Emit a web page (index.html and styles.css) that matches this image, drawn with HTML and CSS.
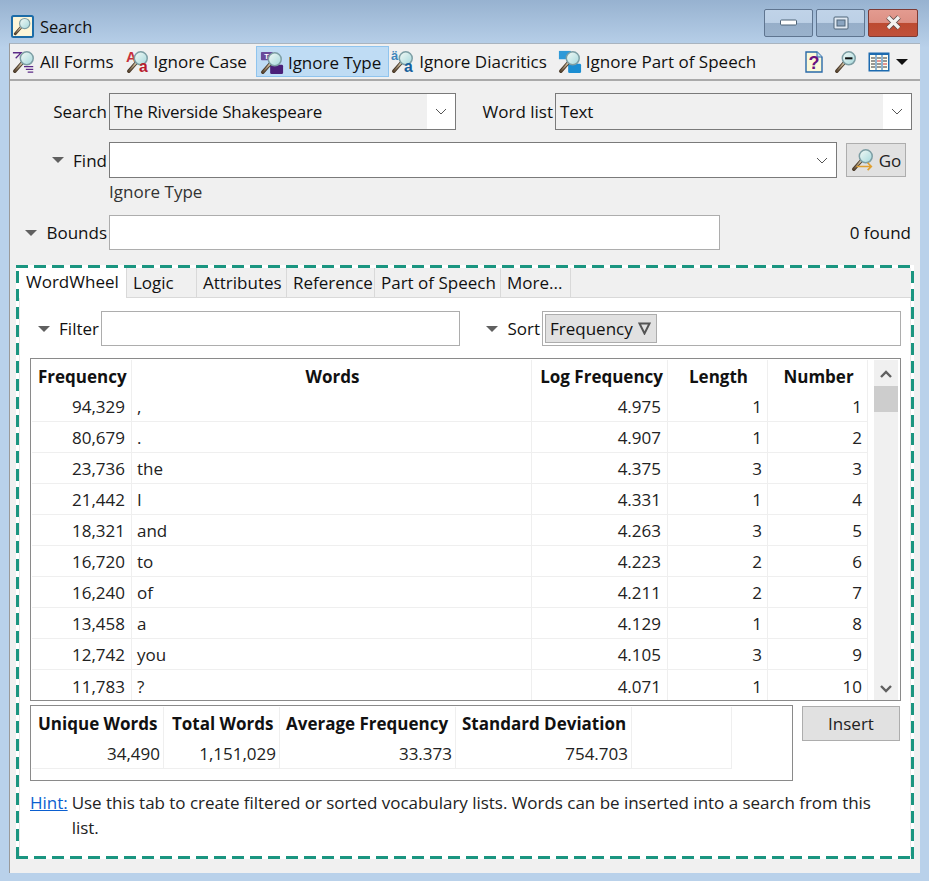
FILE: index.html
```html
<!DOCTYPE html>
<html lang="en">
<head>
    <meta charset="UTF-8">
    <meta name="viewport" content="width=device-width, initial-scale=1.0">
    <title>Search</title>
    <link rel="stylesheet" href="styles.css">
</head>
<body>
    <svg class="defs" width="0" height="0">
        <defs>
            <linearGradient id="glass" x1="0" y1="0" x2="1" y2="1">
                <stop offset="0" stop-color="#f4faf6"/>
                <stop offset="1" stop-color="#a4d8dc"/>
            </linearGradient>
            <linearGradient id="handle" x1="1" y1="0" x2="0" y2="1">
                <stop offset="0" stop-color="#d8c8a8"/>
                <stop offset="1" stop-color="#5a4630"/>
            </linearGradient>
            <symbol id="lens" viewBox="0 0 26 26">
                <path d="M10.500 14.500 3 23" stroke="#4a3a2a" stroke-width="3.800" stroke-linecap="round" fill="none"/>
                <path d="M10.500 14.500 3 23" stroke="url(#handle)" stroke-width="1.800" stroke-linecap="round" fill="none"/>
                <circle cx="16" cy="9" r="7" fill="url(#glass)" stroke="#7d9ea4" stroke-width="1.600"/>
            </symbol>
        </defs>
    </svg>
    <div class="window">
        <div class="titlebar">
            <svg class="title-icon" width="23" height="23" viewBox="0 0 23 23">
                <rect x="1" y="1" width="21" height="21" rx="1.500" fill="#fdf6d8" stroke="#1c6ca8" stroke-width="2"/>
                <use href="#lens" x="2" y="2" width="19" height="19"/>
            </svg>
            <span class="title-text">Search</span>
            <div class="win-btns">
                <div class="win-btn">
                    <svg width="17" height="8" viewBox="0 0 17 8"><rect x="0.500" y="1" width="16" height="5" rx="1" fill="#fff" stroke="#4f6478"/></svg>
                </div>
                <div class="win-btn">
                    <svg width="16" height="14" viewBox="0 0 16 14"><rect x="1" y="1" width="14" height="12" rx="1" fill="#dfe8f2" stroke="#4f6478"/><rect x="4" y="4" width="8" height="6" fill="#8aa4c0" stroke="#4f6478"/></svg>
                </div>
                <div class="win-btn win-close">
                    <svg width="17" height="15" viewBox="0 0 17 15"><path d="M3 2 14 13M14 2 3 13" stroke="#5a4a48" stroke-width="5"/><path d="M3 2 14 13M14 2 3 13" stroke="#f4f2f0" stroke-width="3.400"/></svg>
                </div>
            </div>
        </div>
        <div class="client">
            <div class="toolbar">
                <div class="tool tool-first">
                    <svg class="tool-icon" width="24" height="26" viewBox="0 0 26 26">
                        <path d="M1 3h9L4 9" stroke="#5b2a86" stroke-width="1.400" fill="none"/>
                        <use href="#lens" width="26" height="26"/>
                        <path d="M13 18h10M15 21h8M17 24h6" stroke="#5b2a86" stroke-width="1.200"/>
                    </svg>
                    <span>All Forms</span>
                </div>
                <div class="tool tool-case">
                    <svg class="tool-icon" width="24" height="26" viewBox="0 0 26 26">
                        <text x="0" y="13" class="ico-a">A</text>
                        <use href="#lens" width="26" height="26"/>
                        <text x="14" y="24" class="ico-b">a</text>
                    </svg>
                    <span>Ignore Case</span>
                </div>
                <div class="tool tool-on">
                    <svg class="tool-icon" width="24" height="26" viewBox="0 0 26 26">
                        <rect x="1" y="1" width="13" height="9" rx="1" fill="#6a4a9a"/>
                        <text x="4.500" y="8.500" class="ico-t">T</text>
                        <rect x="11" y="15" width="14" height="10" rx="1.500" fill="#4a1f78"/>
                        <use href="#lens" width="26" height="26"/>
                    </svg>
                    <span>Ignore Type</span>
                </div>
                <div class="tool">
                    <svg class="tool-icon" width="24" height="26" viewBox="0 0 26 26">
                        <text x="0" y="11" class="ico-d">ä</text>
                        <use href="#lens" width="26" height="26"/>
                        <text x="14" y="24" class="ico-c">a</text>
                    </svg>
                    <span>Ignore Diacritics</span>
                </div>
                <div class="tool">
                    <svg class="tool-icon" width="24" height="26" viewBox="0 0 26 26">
                        <rect x="1" y="1" width="13" height="9" fill="#2f9ad8"/>
                        <rect x="11" y="15" width="14" height="10" rx="1.500" fill="#1b8ed2"/>
                        <use href="#lens" width="26" height="26"/>
                    </svg>
                    <span>Ignore Part of Speech</span>
                </div>
                <div class="tool-right">
                    <svg width="20" height="22" viewBox="0 0 20 22">
                        <path d="M2 1h11l5 5v15H2z" fill="#fbf8d8" stroke="#2a6aa8" stroke-width="1.400"/>
                        <path d="M13 1v5h5" fill="#cfe0ee" stroke="#2a6aa8"/>
                        <text x="4.500" y="18" class="ico-q">?</text>
                    </svg>
                    <svg width="24" height="24" viewBox="0 0 26 26">
                        <use href="#lens" width="26" height="26"/>
                        <path d="M12 9h8" stroke="#111" stroke-width="2.200"/>
                    </svg>
                    <svg width="22" height="20" viewBox="0 0 22 20">
                        <rect x="0.500" y="0.500" width="21" height="19" fill="#1d6bb0"/>
                        <rect x="2" y="3" width="18" height="15" fill="#fdfcf0"/>
                        <path d="M8 3v15M14 3v15" stroke="#1d6bb0"/>
                        <path d="M3 6h4M3 9h4M3 12h4M3 15h4M9 6h4M9 12h4M9 15h4M15 6h4M15 9h4M15 15h4" stroke="#333" stroke-width="1"/>
                        <path d="M9 9h4M15 12h4" stroke="#d03030" stroke-width="1.200"/>
                    </svg>
                    <span class="tri-black"></span>
                </div>
            </div>
            <div class="main">
                <div class="row row-search">
                    <label class="lbl lbl-wide">Search</label>
                    <div class="combo combo-search">
                        <span class="combo-val">The Riverside Shakespeare</span>
                        <span class="chev"><svg width="12" height="7" viewBox="0 0 12 7"><path d="M1 1l5 5 5-5" fill="none" stroke="#555"/></svg></span>
                    </div>
                    <label class="lbl lbl-list">Word list</label>
                    <div class="combo combo-list">
                        <span class="combo-val">Text</span>
                        <span class="chev"><svg width="12" height="7" viewBox="0 0 12 7"><path d="M1 1l5 5 5-5" fill="none" stroke="#555"/></svg></span>
                    </div>
                </div>
                <div class="row row-find">
                    <label class="lbl lbl-wide"><span class="tri"></span>Find</label>
                    <div class="combo combo-find">
                        <span class="combo-val"></span>
                        <span class="chev"><svg width="12" height="7" viewBox="0 0 12 7"><path d="M1 1l5 5 5-5" fill="none" stroke="#555"/></svg></span>
                    </div>
                    <button class="btn btn-go">
                        <svg width="24" height="24" viewBox="0 0 26 26">
                            <use href="#lens" width="26" height="26"/>
                            <path d="M6 20h16m-4-4 4 4-4 4" fill="none" stroke="#e0a030" stroke-width="1.800"/>
                        </svg>
                        Go
                    </button>
                </div>
                <div class="find-note">Ignore Type</div>
                <div class="row row-bounds">
                    <label class="lbl lbl-wide"><span class="tri"></span>Bounds</label>
                    <div class="input input-bounds"></div>
                    <span class="found">0 found</span>
                </div>
                <div class="frame">
                    <div class="tabs">
                        <div class="tab tab-on tab-w108">WordWheel</div>
                        <div class="tab tab-w70">Logic</div>
                        <div class="tab tab-w90">Attributes</div>
                        <div class="tab tab-w88">Reference</div>
                        <div class="tab tab-w126">Part of Speech</div>
                        <div class="tab tab-w70">More...</div>
                    </div>
                    <div class="panel">
                        <div class="row row-filter">
                            <label class="lbl lbl-filter"><span class="tri"></span>Filter</label>
                            <div class="input input-filter"></div>
                            <label class="lbl lbl-sort"><span class="tri"></span>Sort</label>
                            <div class="input input-sort">
                                <span class="chip">Frequency
                                    <svg width="13" height="13" viewBox="0 0 13 13"><path d="M1.500 1.500h10L6.500 11.500z" fill="none" stroke="#555" stroke-width="2"/></svg>
                                </span>
                            </div>
                        </div>
                        <div class="grid-box">
                            <table class="words">
                                <colgroup>
                                    <col class="c-freq"><col class="c-word"><col class="c-log"><col class="c-len"><col class="c-num">
                                </colgroup>
                                <thead>
                                    <tr><th class="left-pad">Frequency</th><th class="mid">Words</th><th>Log Frequency</th><th class="mid">Length</th><th class="mid">Number</th></tr>
                                </thead>
                                <tbody>
                                    <tr><td>94,329</td><td class="word">,</td><td>4.975</td><td>1</td><td>1</td></tr>
                                    <tr><td>80,679</td><td class="word">.</td><td>4.907</td><td>1</td><td>2</td></tr>
                                    <tr><td>23,736</td><td class="word">the</td><td>4.375</td><td>3</td><td>3</td></tr>
                                    <tr><td>21,442</td><td class="word">I</td><td>4.331</td><td>1</td><td>4</td></tr>
                                    <tr><td>18,321</td><td class="word">and</td><td>4.263</td><td>3</td><td>5</td></tr>
                                    <tr><td>16,720</td><td class="word">to</td><td>4.223</td><td>2</td><td>6</td></tr>
                                    <tr><td>16,240</td><td class="word">of</td><td>4.211</td><td>2</td><td>7</td></tr>
                                    <tr><td>13,458</td><td class="word">a</td><td>4.129</td><td>1</td><td>8</td></tr>
                                    <tr><td>12,742</td><td class="word">you</td><td>4.105</td><td>3</td><td>9</td></tr>
                                    <tr><td>11,783</td><td class="word">?</td><td>4.071</td><td>1</td><td>10</td></tr>
                                </tbody>
                            </table>
                            <div class="scrollbar">
                                <svg width="14" height="9" viewBox="0 0 14 9"><path d="M2 7l5-5 5 5" fill="none" stroke="#606060" stroke-width="2.400"/></svg>
                                <div class="thumb"></div>
                                <div class="track"></div>
                                <svg width="14" height="9" viewBox="0 0 14 9"><path d="M2 2l5 5 5-5" fill="none" stroke="#606060" stroke-width="2.400"/></svg>
                            </div>
                        </div>
                        <div class="summary-row">
                            <div class="summary-box">
                                <table class="summary">
                                    <colgroup>
                                        <col class="s-uni"><col class="s-tot"><col class="s-avg"><col class="s-dev"><col class="s-end">
                                    </colgroup>
                                    <thead>
                                        <tr><th>Unique Words</th><th>Total Words</th><th>Average Frequency</th><th>Standard Deviation</th><th></th></tr>
                                    </thead>
                                    <tbody>
                                        <tr><td>34,490</td><td>1,151,029</td><td>33.373</td><td>754.703</td><td></td></tr>
                                    </tbody>
                                </table>
                            </div>
                            <button class="btn btn-insert">Insert</button>
                        </div>
                        <div class="hint">
                            <a class="hint-link" href="#">Hint:</a>
                            <p>Use this tab to create filtered or sorted vocabulary lists. Words can be inserted into a search from this list.</p>
                        </div>
                    </div>
                </div>
            </div>
        </div>
    </div>
</body>
</html>
```

FILE: styles.css
```css
* {
    margin: 0;
    padding: 0;
    box-sizing: border-box;
}
body {
    font-family: "Open Sans", "Noto Sans", Arial, sans-serif;
    font-size: 17px;
    color: #111;
    overflow: hidden;
}
.defs {
    position: absolute;
}
.window {
    width: 929px;
    height: 881px;
    padding: 0 9px 8px;
    display: flex;
    flex-direction: column;
    background: linear-gradient(#97b2d0 0, #b9d1ea 48px);
}
.titlebar {
    height: 43px;
    flex: none;
    display: flex;
    align-items: center;
    padding-left: 2px;
    padding-top: 9px;
}
.title-icon {
    margin-right: 6px;
}
.title-text {
    font-size: 16.500px;
}
.win-btns {
    margin-left: auto;
    margin-top: -7px;
    margin-right: 2px;
    display: flex;
    gap: 3px;
}
.win-btn {
    width: 49px;
    height: 28px;
    display: flex;
    align-items: center;
    justify-content: center;
    border: 1px solid #5f7590;
    border-radius: 2px;
    background: linear-gradient(#c0d3e8 0, #bcd0e6 48%, #96aec9 50%, #9ab2cc 100%);
}
.win-close {
    width: 50px;
    border-color: #7d3a34;
    background: linear-gradient(#e39b90 0, #dd9084 48%, #bc4a30 50%, #c0503a 100%);
}
.client {
    flex: 1;
    display: flex;
    flex-direction: column;
    background: #f0f0f0;
    border-top: 1px solid #a9b4bf;
    border-left: 1px solid #9a9a9a;
    min-height: 0;
}
.toolbar {
    height: 37px;
    flex: none;
    display: flex;
    align-items: center;
    gap: 1px;
    padding-right: 12px;
    border-bottom: 2px solid #aaa;
}
.tool {
    height: 31px;
    display: flex;
    align-items: center;
    gap: 4px;
    padding: 0 5px 0 3px;
    border: 1px solid transparent;
}
.tool-first {
    margin-left: -2px;
}
.tool-case {
    margin-left: 1px;
}
.tool-on {
    margin-left: 2px;
    margin-right: -3px;
    padding-top: 2px;
    padding-right: 7px;
    background: #bfdcf4;
    border-color: #8fc4ee;
}
.tool-icon {
    flex: none;
    overflow: visible;
}
.ico-a {
    font: bold 16px "Liberation Sans", sans-serif;
    fill: #c8323c;
}
.ico-b {
    font: bold 17px "Liberation Sans", sans-serif;
    fill: #b81c2c;
}
.ico-t {
    font: bold 8px "Liberation Sans", sans-serif;
    fill: #fff;
}
.ico-c {
    font: bold 17px "Liberation Sans", sans-serif;
    fill: #155f9c;
}
.ico-d {
    font: bold 14px "Liberation Sans", sans-serif;
    fill: #3f86bc;
}
.ico-q {
    font: bold 18px "Liberation Sans", sans-serif;
    fill: #6a1080;
}
.tool-right {
    margin-left: auto;
    display: flex;
    align-items: center;
    gap: 10px;
}
.tri-black {
    width: 0;
    height: 0;
    margin-left: -4px;
    border-left: 6px solid transparent;
    border-right: 6px solid transparent;
    border-top: 6px solid #111;
}
.main {
    flex: 1;
    display: flex;
    flex-direction: column;
    padding: 12px 6px 14px;
    min-height: 0;
}
.row {
    display: flex;
    align-items: center;
}
.row-search {
    height: 37px;
}
.row-find {
    height: 36px;
    margin-top: 12px;
}
.row-bounds {
    height: 35px;
}
.lbl {
    flex: none;
    display: flex;
    align-items: center;
    justify-content: flex-end;
    white-space: nowrap;
}
.lbl-wide {
    width: 91px;
    margin-right: 2px;
}
.tri {
    width: 0;
    height: 0;
    margin-right: 9px;
    border-left: 6px solid transparent;
    border-right: 6px solid transparent;
    border-top: 6px solid #606060;
}
.combo {
    height: 100%;
    display: flex;
    align-items: center;
    border: 1px solid #7a7a7a;
    background: #fff;
}
.combo-val {
    flex: 1;
    height: 100%;
    display: flex;
    align-items: center;
    padding-left: 4px;
    letter-spacing: -0.150px;
}
.combo-search .combo-val,
.combo-list .combo-val {
    background: #f0f0f0;
}
.chev {
    width: 28px;
    display: flex;
    justify-content: center;
}
.combo-search {
    width: 347px;
}
.lbl-list {
    width: 97px;
    margin-right: 2px;
}
.combo-list {
    width: 357px;
}
.combo-find {
    width: 728px;
}
.btn {
    font: inherit;
    color: #222;
    background: #e1e1e1;
    border: 1px solid #adadad;
}
.btn-go {
    width: 60px;
    height: 34px;
    margin-left: 9px;
    display: flex;
    align-items: center;
    justify-content: center;
    gap: 4px;
}
.find-note {
    height: 37px;
    padding-left: 93px;
    padding-top: 2px;
    color: #333;
}
.input {
    height: 100%;
    background: #fff;
    border: 1px solid #adadad;
}
.input-bounds {
    width: 611px;
}
.found {
    margin-left: auto;
    margin-right: 3px;
}
.frame {
    margin-top: 15px;
    width: 898px;
    height: 594px;
    padding: 3px;
    display: flex;
    flex-direction: column;
    background-color: #fff;
    background-image:
        repeating-linear-gradient(90deg, #1a9580 0 12px, transparent 12px 18px),
        repeating-linear-gradient(90deg, #1a9580 0 12px, transparent 12px 18px),
        repeating-linear-gradient(0deg, #1a9580 0 12px, transparent 12px 18px),
        repeating-linear-gradient(0deg, #1a9580 0 12px, transparent 12px 18px);
    background-size: 100% 3px, 100% 3px, 3px 100%, 3px 100%;
    background-position: 0 0, 0 100%, 0 0, 100% 0;
    background-repeat: no-repeat;
}
.tabs {
    height: 30px;
    flex: none;
    display: flex;
    background: #f0f0f0;
    border-bottom: 1px solid #d9d9d9;
}
.tab {
    display: flex;
    align-items: center;
    padding-left: 6px;
    border-right: 1px solid #d9d9d9;
    white-space: nowrap;
}
.tab-on {
    height: 30px;
    padding-left: 7px;
    padding-bottom: 3px;
    background: #fff;
}
.tab-w108 { width: 108px; }
.tab-w70 { width: 70px; }
.tab-w90 { width: 90px; }
.tab-w88 { width: 88px; }
.tab-w126 { width: 126px; }
.panel {
    flex: 1;
    padding: 13px 9px 0 10px;
    background: #fff;
    border-left: 1px solid #e8e8e8;
    border-right: 1px solid #e8e8e8;
    min-height: 0;
}
.row-filter {
    height: 35px;
}
.lbl-filter {
    width: 69px;
    margin-right: 2px;
}
.input-filter {
    width: 359px;
}
.lbl-sort {
    width: 80px;
    margin-right: 2px;
}
.input-sort {
    flex: 1;
    padding: 2px;
}
.chip {
    width: 112px;
    height: 100%;
    display: flex;
    align-items: center;
    gap: 5px;
    padding-left: 4px;
    background: #e1e1e1;
    border: 1px solid #adadad;
}
.grid-box {
    height: 343px;
    margin-top: 12px;
    padding: 1px 2px 0 1px;
    display: flex;
    overflow: hidden;
    border: 1px solid #8a8a8a;
}
table {
    border-collapse: separate;
    border-spacing: 0;
    table-layout: fixed;
}
.words {
    width: 836px;
    height: 341px;
}
.c-freq { width: 100px; }
.c-word { width: 400px; }
.c-log { width: 136px; }
.c-len { width: 100px; }
.c-num { width: 100px; }
th {
    height: 31px;
    padding: 1px 4px 0 6px;
    font-weight: bold;
    text-align: right;
    white-space: nowrap;
    border-right: 1px solid #efefef;
}
.words th.left-pad {
    text-align: left;
}
.words th.mid {
    text-align: center;
}
td {
    height: 31px;
    padding: 1px 6px 0 0;
    text-align: right;
    color: #222;
    border-right: 1px solid #efefef;
    border-bottom: 1px solid #efefef;
}
.words td:nth-child(n+4) {
    padding-right: 5px;
}
.words td.word {
    text-align: left;
    padding-left: 5px;
}
.words tr:last-child td {
    border-bottom: none;
}
.scrollbar {
    width: 24px;
    margin-left: 6px;
    display: flex;
    flex-direction: column;
    align-items: center;
    background: #f0f0f0;
}
.scrollbar svg {
    flex: none;
    margin: 10px 0 7px;
}
.thumb {
    width: 100%;
    height: 26px;
    background: #cdcdcd;
}
.track {
    flex: 1;
}
.summary-row {
    margin-top: 4px;
    display: flex;
    align-items: flex-start;
}
.summary-box {
    width: 763px;
    height: 76px;
    padding: 1px;
    border: 1px solid #8a8a8a;
}
.summary {
    width: 700px;
}
.s-uni { width: 132px; }
.s-tot { width: 116px; }
.s-avg { width: 176px; }
.s-dev { width: 176px; }
.s-end { width: 100px; }
.summary th {
    text-align: left;
}
.summary th:nth-child(2) {
    padding-left: 8px;
}
.summary td {
    padding-right: 3px;
}
.btn-insert {
    width: 98px;
    height: 35px;
    margin-left: 9px;
    margin-top: 1px;
}
.hint {
    margin-top: 9px;
    display: flex;
    gap: 4px;
    line-height: 25px;
    letter-spacing: -0.030px;
    color: #222;
}
.hint-link {
    flex: none;
    color: #0b5fd0;
    text-decoration: underline;
}
```
